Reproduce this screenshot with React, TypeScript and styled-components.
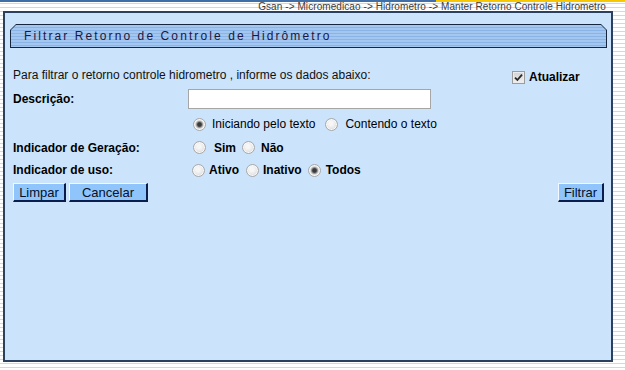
import React from "react";
import styled, {createGlobalStyle, css} from "styled-components";

const GlobalStyle = createGlobalStyle`
	html, body {
		margin: 0;
		padding: 0;
	}
	body {
		width: 625px;
		height: 370px;
		overflow: hidden;
		background: repeating-linear-gradient(to bottom, #ffffff 0 3px, #c6dbef 3px 4px);
		font-family: "Liberation Sans", Arial, sans-serif;
		color: #000;
	}
`;

const Page = styled.div`
	display: flex;
	flex-direction: column;
	width: 625px;
	height: 370px;
`;

const TopBand = styled.div`
	display: flex;
	height: 2px;
`;

const BandPart = styled.div<{$color: string; $width?: number}>`
	background: ${({$color}) => $color};
	${({$width}) =>
		$width
			? css`
					width: ${$width}px;
			  `
			: css`
					flex: 1;
			  `};
`;

const Breadcrumb = styled.div`
	height: 9px;
	line-height: 9px;
	font-size: 10px;
	letter-spacing: 0.08px;
	color: #3c3c3c;
	text-align: right;
	padding-right: 19px;
	white-space: nowrap;
`;

const Panel = styled.section`
	box-sizing: border-box;
	margin-left: 3px;
	width: 610px;
	height: 351px;
	border: 2px solid #2b405c;
	background: #cbe4fc;
	padding: 11px 4px 0 5px;
`;

const TitleFrame = styled.div`
	box-sizing: border-box;
	height: 24px;
	padding: 1px;
	background: #16263d;
	clip-path: polygon(6px 0, calc(100% - 6px) 0, 100% 6px, 100% 100%, 0 100%, 0 6px);
`;

const TitleInner = styled.h1`
	box-sizing: border-box;
	margin: 0;
	height: 100%;
	display: flex;
	align-items: center;
	padding-left: 13px;
	background: repeating-linear-gradient(to bottom, #a3c7f0 0 2px, #8ab4e6 2px 3px);
	clip-path: polygon(5px 0, calc(100% - 5px) 0, 100% 5px, 100% 100%, 0 100%, 0 5px);
	font-size: 12px;
	font-weight: normal;
	letter-spacing: 2.1px;
	color: #1b1740;
`;

const Form = styled.form`
	margin: 15px 0 0 3px;
	width: 591px;
	display: grid;
	grid-template-columns: 175px 1fr;
	grid-template-rows: 24px 23px 28px 19px 26px 19px;
	align-items: center;
	font-size: 12px;
`;

const FullRow = styled.div`
	grid-column: 1 / -1;
	display: flex;
	align-items: center;
	height: 100%;
`;

const Intro = styled.span`
	flex: 1;
	color: #111;
`;

const CheckLabel = styled.label`
	width: 92px;
	margin-top: 4px;
	display: flex;
	align-items: center;
	gap: 4px;
	font-weight: bold;
`;

const CheckBox = styled.span`
	box-sizing: border-box;
	width: 13px;
	height: 13px;
	border: 1px solid #9c9c9c;
	background: linear-gradient(to bottom, #d2d2d2, #f2f2f2);
	box-shadow: inset 0 0 0 1px #ececec;
	display: flex;
	align-items: center;
	justify-content: center;
`;

const FieldLabel = styled.span`
	font-weight: bold;
`;

const TextInput = styled.input`
	box-sizing: border-box;
	width: 243px;
	height: 20px;
	margin: 0;
	border: 1px solid #a6a6a6;
	background: #fff;
	font: 12px "Liberation Sans", Arial, sans-serif;
`;

const Options = styled.div`
	grid-column: 2;
	display: flex;
	align-items: center;
	height: 100%;
`;

const Option = styled.label<{$lead: number; $gap: number; $bold?: boolean}>`
	display: inline-flex;
	align-items: center;
	margin-left: ${({$lead}) => $lead}px;
	gap: ${({$gap}) => $gap}px;
	font-weight: ${({$bold}) => ($bold ? "bold" : "normal")};
`;

const RadioDot = styled.span<{$checked?: boolean}>`
	box-sizing: border-box;
	width: 13px;
	height: 13px;
	border-radius: 50%;
	border: 1px solid #a9a9a9;
	background: ${({$checked}) =>
		$checked
			? "radial-gradient(circle, #3a3a3a 0 1.8px, #8a8a8a 2.8px, #d8d8d8 4px, #f2f2f2 6px)"
			: "radial-gradient(circle at 45% 40%, #f6f6f6 0 2px, #e6e6e6 5px, #d6d6d6 6px)"};
	box-shadow: inset 0 0 0 1px #f8f8f8;
`;

const ButtonRow = styled(FullRow)`
	gap: 3px;
`;

const Button = styled.button<{$width: number; $push?: boolean}>`
	box-sizing: border-box;
	width: ${({$width}) => $width}px;
	height: 19px;
	padding: 0;
	margin: 0;
	${({$push}) =>
		$push &&
		css`
			margin-left: auto;
		`};
	background: #8fc5fb;
	border-style: solid;
	border-width: 1px 2px 2px 1px;
	border-color: #f2f8ff #0b1d4c #0b1d4c #f2f8ff;
	font: 13px "Liberation Sans", Arial, sans-serif;
	color: #05102a;
	line-height: 15px;
`;

const Radio: React.FC<{checked?: boolean; lead: number; gap: number; bold?: boolean; children: React.ReactNode}> = ({
	checked,
	lead,
	gap,
	bold,
	children
}) => (
	<Option $lead={lead} $gap={gap} $bold={bold}>
		<RadioDot $checked={checked} />
		<span>{children}</span>
	</Option>
);

export default function App() {
	return (
		<Page>
			<GlobalStyle />
			<TopBand>
				<BandPart $color="#3f6fa6" $width={436} />
				<BandPart $color="#f7c800" />
			</TopBand>
			<Breadcrumb>Gsan -&gt; Micromedicao -&gt; Hidrometro -&gt; Manter Retorno Controle Hidrometro</Breadcrumb>
			<Panel>
				<TitleFrame>
					<TitleInner>Filtrar Retorno de Controle de Hidrômetro</TitleInner>
				</TitleFrame>
				<Form onSubmit={e => e.preventDefault()}>
					<FullRow>
						<Intro>Para filtrar o retorno controle hidrometro , informe os dados abaixo:</Intro>
						<CheckLabel>
							<CheckBox>
								<svg width="9" height="9" viewBox="0 0 9 9">
									<path d="M1 4.6 L3.4 7 L8 1.6" fill="none" stroke="#2a2a2a" strokeWidth="1.8" />
								</svg>
							</CheckBox>
							Atualizar
						</CheckLabel>
					</FullRow>

					<FieldLabel>Descrição:</FieldLabel>
					<div>
						<TextInput type="text" />
					</div>

					<Options>
						<Radio checked lead={5} gap={6}>
							Iniciando pelo texto
						</Radio>
						<Radio lead={10} gap={7}>
							Contendo o texto
						</Radio>
					</Options>

					<FieldLabel>Indicador de Geração:</FieldLabel>
					<Options>
						<Radio lead={5} gap={8} bold>
							Sim
						</Radio>
						<Radio lead={6} gap={6} bold>
							Não
						</Radio>
					</Options>

					<FieldLabel>Indicador de uso:</FieldLabel>
					<Options>
						<Radio lead={4} gap={4} bold>
							Ativo
						</Radio>
						<Radio lead={7} gap={4} bold>
							Inativo
						</Radio>
						<Radio checked lead={6} gap={5} bold>
							Todos
						</Radio>
					</Options>

					<ButtonRow>
						<Button type="button" $width={53}>
							Limpar
						</Button>
						<Button type="button" $width={79}>
							Cancelar
						</Button>
						<Button type="submit" $width={46} $push>
							Filtrar
						</Button>
					</ButtonRow>
				</Form>
			</Panel>
		</Page>
	);
}
